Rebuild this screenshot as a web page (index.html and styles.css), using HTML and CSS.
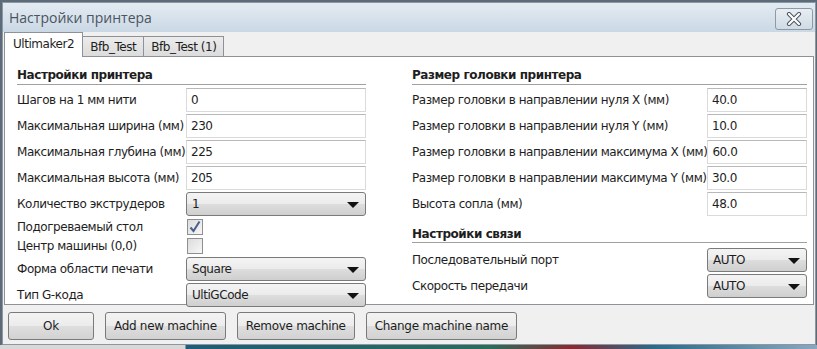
FILE: index.html
```html
<!DOCTYPE html>
<html lang="ru">
<head>
    <meta charset="UTF-8">
    <meta name="viewport" content="width=device-width, initial-scale=1.0">
    <title>Настройки принтера</title>
    <link rel="stylesheet" href="styles.css">
</head>
<body>
    <div class="window">
        <!-- Title bar -->
        <div class="titlebar">
            <span class="title">Настройки принтера</span>
            <button class="close-btn" aria-label="Закрыть">
                <svg width="20" height="14" viewBox="0 0 20 14">
                    <path d="M5 2 L15 12 M15 2 L5 12" stroke="#4d5560" stroke-width="4.2" stroke-linecap="round"/>
                    <path d="M5 2 L15 12 M15 2 L5 12" stroke="#ffffff" stroke-width="2.2" stroke-linecap="round"/>
                </svg>
            </button>
        </div>

        <!-- Tabs -->
        <div class="tabs">
            <div class="tab active">Ultimaker2</div>
            <div class="tab">Bfb_Test</div>
            <div class="tab">Bfb_Test (1)</div>
        </div>

        <!-- Tab pane -->
        <div class="pane">
            <div class="column left">
                <div class="group-title">Настройки принтера</div>
                <div class="row"><span class="label">Шагов на 1 мм нити</span><input class="field" type="text" value="0"></div>
                <div class="row"><span class="label">Максимальная ширина (мм)</span><input class="field" type="text" value="230"></div>
                <div class="row"><span class="label">Максимальная глубина (мм)</span><input class="field" type="text" value="225"></div>
                <div class="row"><span class="label">Максимальная высота (мм)</span><input class="field" type="text" value="205"></div>
                <div class="row"><span class="label">Количество экструдеров</span><div class="combo">1</div></div>
                <div class="row check-row"><span class="label">Подогреваемый стол</span>
                    <span class="checkbox">
                        <svg width="14" height="14" viewBox="0 0 14 14"><path d="M2.5 7.5 L5.5 11 L11.5 1.5" fill="none" stroke="#4a5f8f" stroke-width="2"/></svg>
                    </span>
                </div>
                <div class="row check-row"><span class="label">Центр машины (0,0)</span><span class="checkbox"></span></div>
                <div class="row combo-row"><span class="label">Форма области печати</span><div class="combo">Square</div></div>
                <div class="row"><span class="label">Тип G-кода</span><div class="combo">UltiGCode</div></div>
            </div>

            <div class="column right">
                <div class="group-title">Размер головки принтера</div>
                <div class="row"><span class="label">Размер головки в направлении нуля X (мм)</span><input class="field" type="text" value="40.0"></div>
                <div class="row"><span class="label">Размер головки в направлении нуля Y (мм)</span><input class="field" type="text" value="10.0"></div>
                <div class="row"><span class="label">Размер головки в направлении максимума X (мм)</span><input class="field" type="text" value="60.0"></div>
                <div class="row"><span class="label">Размер головки в направлении максимума Y (мм)</span><input class="field" type="text" value="30.0"></div>
                <div class="row"><span class="label">Высота сопла (мм)</span><input class="field" type="text" value="48.0"></div>
                <div class="group-title second">Настройки связи</div>
                <div class="row"><span class="label">Последовательный порт</span><div class="combo">AUTO</div></div>
                <div class="row"><span class="label">Скорость передачи</span><div class="combo">AUTO</div></div>
            </div>
        </div>

        <!-- Dialog buttons -->
        <div class="actions">
            <button class="btn btn-ok">Ok</button>
            <button class="btn">Add new machine</button>
            <button class="btn">Remove machine</button>
            <button class="btn">Change machine name</button>
        </div>
    </div>
    <div class="desktop"></div>
</body>
</html>
```

FILE: styles.css
```css
/* Reset */
* {
    margin: 0;
    padding: 0;
    box-sizing: border-box;
}
body {
    width: 817px;
    height: 349px;
    overflow: hidden;
    background-color: #5d6b78;
    font-family: "DejaVu Sans", Verdana, sans-serif;
    font-size: 12px;
    letter-spacing: -0.45px;
    color: #1e1e1e;
}

/* Window frame */
.window {
    margin: 2px 1px 0 2px;
    height: 343px;
    border: 1px solid #8b98a4;
    background-color: #f0f0f0;
}

.titlebar {
    height: 29px;
    display: flex;
    justify-content: space-between;
    align-items: flex-start;
    padding: 4px 2px 0 6px;
    background: linear-gradient(to bottom, #e4ebf2, #cad8e5);
}
.title {
    font-family: "Open Sans", "Noto Sans", sans-serif;
    font-size: 14px;
    letter-spacing: 0;
    color: #4b5560;
    line-height: 22px;
}
.close-btn {
    width: 38px;
    height: 22px;
    margin-top: 1px;
    border: 1px solid #8d9aa6;
    border-radius: 3px;
    background: linear-gradient(to bottom, #e8eef3, #d0dbe5);
    display: flex;
    align-items: center;
    justify-content: center;
}

/* Tabs */
.tabs {
    display: flex;
    align-items: flex-end;
    height: 24px;
    padding-left: 1px;
    position: relative;
    z-index: 1;
}
.tab {
    height: 20px;
    padding: 0 7px;
    border: 1px solid #8e9296;
    border-bottom: none;
    background: linear-gradient(to bottom, #ececec, #dcdcdc);
    line-height: 20px;
    margin-left: -1px;
}
.tab:first-child {
    margin-left: 0;
}
.tab.active {
    height: 25px;
    padding: 0 8px;
    background-color: #fff;
    background-image: none;
    margin-bottom: -1px;
    line-height: 22px;
}

/* Pane */
.pane {
    height: 249px;
    margin: 0 1px 0 1px;
    border: 1px solid #8e9296;
    background-color: #fff;
    display: flex;
    padding: 9px 6px 0 12px;
}
.column {
    display: flex;
    flex-direction: column;
    gap: 2px;
}
.column.left {
    width: 350px;
}
.column.right {
    margin-left: 46px;
    width: 395px;
}

.group-title {
    font-weight: bold;
    height: 19px;
    line-height: 18px;
    border-bottom: 1px solid #a0a0a0;
    margin-bottom: 1px;
}
.group-title.second {
    margin-top: 8px;
    height: 17px;
    line-height: 16px;
    margin-bottom: 3px;
}

.row {
    display: flex;
    align-items: center;
    justify-content: space-between;
    height: 24px;
}
.check-row {
    height: 16px;
    margin-top: 1px;
}
.combo-row {
    margin-top: 1px;
}
.label {
    white-space: nowrap;
}

.field {
    flex-shrink: 0;
    height: 24px;
    border: 1px solid #dadada;
    border-top-color: #b8b8b8;
    padding: 0 4px;
    font-family: inherit;
    font-size: 12px;
    letter-spacing: inherit;
    color: #1e1e1e;
    outline: none;
}
.left .field, .left .combo {
    width: 180px;
}
.right .field, .right .combo {
    width: 100px;
}

.combo {
    flex-shrink: 0;
    height: 24px;
    line-height: 22px;
    padding: 0 5px;
    border: 1px solid #7a7a7a;
    border-radius: 3px;
    background: linear-gradient(to bottom, #f4f4f4 0%, #ebebeb 50%, #dddddd 51%, #cfcfcf 100%);
    position: relative;
}
.combo::after {
    content: "";
    position: absolute;
    right: 6px;
    top: 9px;
    border-left: 6px solid transparent;
    border-right: 6px solid transparent;
    border-top: 6px solid #111;
}

.checkbox {
    width: 16px;
    height: 16px;
    margin-right: 163px;
    border: 1px solid #8f8f8f;
    background: linear-gradient(to bottom right, #dcdcdc, #f7f7f7);
    display: flex;
    align-items: center;
    justify-content: center;
}

/* Dialog buttons */
.actions {
    display: flex;
    gap: 11px;
    padding: 7px 0 0 5px;
}
.btn {
    height: 28px;
    padding: 0 8px;
    border: 1px solid #7a7a7a;
    border-radius: 3px;
    background: linear-gradient(to bottom, #f3f3f3 0%, #ececec 50%, #dedede 51%, #d2d2d2 100%);
    font-family: "DejaVu Sans", Verdana, sans-serif;
    font-size: 12px;
    letter-spacing: -0.3px;
    color: #1e1e1e;
}
.btn-ok {
    width: 86px;
}

.desktop {
    height: 4px;
    background: linear-gradient(to right, #d8d8d8 0, #d8d8d8 185px, #1f5c78 186px, #2b6d5a 60%, #8a2a30 70%, #2a6a8a 80%, #8aa8c0 100%);
}
```
